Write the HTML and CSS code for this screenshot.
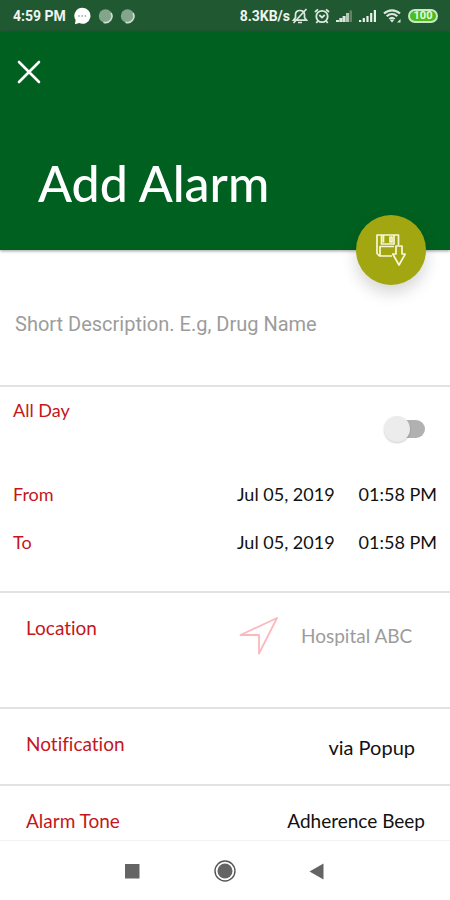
FILE: index.html
```html
<!DOCTYPE html>
<html lang="en">
<head>
<meta charset="utf-8">
<meta name="viewport" content="width=device-width, initial-scale=1">
<title>Add Alarm</title>
<link rel="stylesheet" href="styles.css">
</head>
<body>
<div class="screen">
  <div class="status">
    <div class="status-group">
      <span>4:59 PM</span>
      <svg width="18" height="18" viewBox="0 0 18 18" aria-hidden="true"><path d="M9.500 .8a8 8 0 1 1-3.300 15.300L2 17.300l.6-4.200A8 8 0 0 1 9.500.8z" fill="#fff"/><g fill="#a9bfae"><circle cx="6" cy="9" r="1"/><circle cx="9.200" cy="9" r="1"/><circle cx="12.400" cy="9" r="1"/></g></svg>
      <svg class="orb" width="15" height="16" viewBox="0 0 15 16" aria-hidden="true"><circle cx="7.500" cy="8" r="6.700" fill="#82a58b"/><path d="M13 5a6.300 6.300 0 0 1-7.500 9.200" fill="none" stroke="#cfdfd2" stroke-width="1.600"/></svg>
      <svg class="orb" width="15" height="16" viewBox="0 0 15 16" aria-hidden="true"><circle cx="7.500" cy="8" r="6.700" fill="#82a58b"/><path d="M13 5a6.300 6.300 0 0 1-7.500 9.200" fill="none" stroke="#cfdfd2" stroke-width="1.600"/></svg>
    </div>
    <div class="status-group status-right">
      <div class="speed">
        <span>8.3KB/s</span>
        <svg width="16" height="16" viewBox="0 0 16 16" fill="none" stroke="#dce8de" stroke-width="1.700" aria-hidden="true"><path d="M1.500 12.200h13l-2-2.700V6.500C12.500 4 10.500 2.500 8 2.500S3.500 4 3.500 6.500v3zM6 14.500h4M14.500 1 1.500 15"/></svg>
      </div>
      <svg width="16" height="16" viewBox="0 0 16 16" fill="none" stroke="#dce8de" stroke-width="1.800" aria-hidden="true"><circle cx="8" cy="8.500" r="5.700"/><path d="M5.300 7 8 9.500 10.800 7M1 4l3-2.700M15 4l-3-2.700M3.800 13l-1.500 2M12.200 13l1.500 2"/></svg>
      <svg width="17" height="14" viewBox="0 0 17 14" aria-hidden="true"><path d="M0 13v-2h3v2zm3.300 0V9h3v4zM6.600 13V7h3v6z" fill="#dce8de"/><path d="M10 13V4h3v9z" fill="#b4c8b8"/><path d="M13.500 13V1.500H16V13z" fill="#5f8268"/></svg>
      <svg width="18" height="14" viewBox="0 0 18 14" aria-hidden="true"><path d="M0 13v-2h2.200v2zm3.700 0V9h2.200v4zm3.700 0V7h2.200v6zm3.700 0V4h2.200v9zm3.700 0V1H17v12z" fill="#e8f0e9"/></svg>
      <svg width="19" height="16" viewBox="0 0 19 16" aria-hidden="true"><g fill="none" stroke="#dce8de" stroke-width="2.200"><path d="M1 5.500c4.600-4.300 11.400-4.300 16 0M3.700 8.300c3.200-2.900 7.400-2.900 10.600 0M6.300 11c1.700-1.500 3.700-1.500 5.400 0"/></g><path d="m9 14.500-2-2.200c1.200-1 2.800-1 4 0zM14 14.500l3.500-3.500v3.500z" fill="#dce8de"/></svg>
      <span class="battery">100</span>
    </div>
  </div>

  <header class="header">
    <button class="close" type="button" aria-label="Close">
      <svg width="24" height="24" viewBox="0 0 24 24" fill="none" stroke="#fff" stroke-width="2.600" stroke-linecap="round"><path d="m2 2 20 20M22 2 2 22"/></svg>
    </button>
    <h1 class="title">Add Alarm</h1>
    <button class="save" type="submit" form="alarm" aria-label="Save">
      <svg width="30" height="32" viewBox="0 0 30 32" fill="none" stroke="#f8f8d8" stroke-width="1.700" stroke-linejoin="round"><path d="M16 22H3.500L1 19.500V1h21.500v10M5.500 1v9H18V1M7.500 1v7.500M14 3v5h2V3z"/><path d="M4 22V12.500h14"/><path d="M20 12h6v8h3.200L23 31l-6.200-11H20z"/></svg>
    </button>
  </header>

  <form class="form" id="alarm">
    <section class="section description">
      <input class="field" type="text" placeholder="Short Description. E.g, Drug Name" aria-label="Short description">
    </section>

    <section class="section schedule">
      <div class="row all-day">
        <label class="label" for="all-day">All Day</label>
        <input class="switch" id="all-day" type="checkbox" role="switch">
      </div>
      <div class="row">
        <span class="label">From</span>
        <span class="when"><button class="value" type="button">Jul 05, 2019</button><button class="value" type="button">01:58 PM</button></span>
      </div>
      <div class="row">
        <span class="label">To</span>
        <span class="when"><button class="value" type="button">Jul 05, 2019</button><button class="value" type="button">01:58 PM</button></span>
      </div>
    </section>

    <section class="section inset location">
      <label class="label" for="place">Location</label>
      <div class="place">
        <svg width="40" height="40" viewBox="0 0 40 40" fill="none" stroke="#fbb9bd" stroke-width="1.800" stroke-linejoin="round" aria-hidden="true"><path d="M38 2 1.500 19H20v18.500z"/></svg>
        <input class="field" id="place" type="text" placeholder="Hospital ABC">
      </div>
    </section>

    <section class="section inset notification">
      <span class="label">Notification</span>
      <button class="value" type="button">via Popup</button>
    </section>

    <section class="section inset tone">
      <span class="label">Alarm Tone</span>
      <button class="value" type="button">Adherence Beep</button>
    </section>
  </form>

  <nav class="nav" aria-label="System">
    <button type="button" aria-label="Recent apps"><svg width="22" height="22" viewBox="0 0 22 22"><path d="M3 4h14.500v14.500H3z" fill="#646464"/></svg></button>
    <button type="button" aria-label="Home"><svg width="22" height="22" viewBox="0 0 22 22"><circle cx="11" cy="11" r="10" fill="none" stroke="#555" stroke-width="1.400"/><circle cx="11" cy="11" r="7.500" fill="#646464"/></svg></button>
    <button type="button" aria-label="Back"><svg width="22" height="22" viewBox="0 0 22 22"><path d="M17.500 3.500v16L3.500 11.500z" fill="#646464"/></svg></button>
  </nav>
</div>
</body>
</html>
```
FILE: styles.css
```css
* { box-sizing: border-box; }

body {
  margin: 0;
  background: #fff;
  color: #111;
  font: 19px/24px Lato, Roboto, sans-serif;
  font-variant-ligatures: none;
}

button, input { font: inherit; color: inherit; }

button {
  padding: 0;
  border: 0;
  background: none;
}

svg { display: block; flex: none; }

.screen {
  display: flex;
  flex-direction: column;
  min-height: 100vh;
}

.status {
  display: flex;
  justify-content: space-between;
  align-items: center;
  height: 32px;
  padding: 0 12px 0 13px;
  background: #205832;
  color: #f0f5f0;
  font: 700 14px/16px Roboto, sans-serif;
}

.status-group { display: flex; align-items: center; gap: 7px; }
.status-right { gap: 6px; }
.speed { display: flex; align-items: center; gap: 2px; }

.battery {
  width: 30px;
  height: 14px;
  border: 2px solid #c9e8c4;
  border-radius: 7px;
  background: #4dbb22;
  color: #e4ffd8;
  font-size: 11px;
  line-height: 10px;
  text-align: center;
}

.header {
  position: relative;
  display: flex;
  flex-direction: column;
  justify-content: space-between;
  height: 218px;
  padding: 28px 38px 37px 17px;
  background: #00601f;
  box-shadow: 0 1px 3px rgba(0, 0, 0, .4);
}

.close { width: 24px; height: 24px; }

.title {
  margin: 0 0 0 21px;
  color: #fff;
  font-size: 50px;
  font-weight: 500;
  line-height: 60px;
}

.save {
  position: absolute;
  right: 24px;
  bottom: -35px;
  display: grid;
  place-items: center;
  width: 70px;
  height: 70px;
  border-radius: 50%;
  background: #a1a611;
  box-shadow: 0 8px 16px rgba(0, 0, 0, .16);
}

.form { flex: 1; }

.section { border-bottom: 2px solid #e2e2e2; }
.label { color: #c4161c; }

.field {
  width: 100%;
  padding: 0;
  border: 0;
  outline: 0;
  background: none;
}
.field::placeholder { color: #9c9c9c; opacity: 1; }

.description {
  height: 137px;
  padding: 62px 15px 0;
  font-family: Roboto, sans-serif;
  font-size: 20px;
}

.schedule {
  display: flex;
  flex-direction: column;
  gap: 24px;
  height: 206px;
  padding: 11px 13px 0;
  font-size: 18px;
}

.row { display: flex; justify-content: space-between; }
.all-day { height: 60px; padding-right: 12px; }
.when { display: flex; gap: 24px; }

.switch {
  appearance: none;
  position: relative;
  width: 32px;
  height: 18px;
  margin: 22px 0 0;
  border-radius: 9px;
  background: #b1b1b1;
}
.switch::before {
  content: "";
  position: absolute;
  top: -4px;
  left: -9px;
  width: 26px;
  height: 26px;
  border-radius: 50%;
  background: #ececec;
  box-shadow: 0 1px 2px rgba(0, 0, 0, .2);
}
.switch:checked::before { left: 15px; }

.inset {
  display: flex;
  justify-content: space-between;
  align-items: flex-start;
  padding: 23px 25px 0 26px;
}

.location { height: 116px; }
.place { display: flex; align-items: center; gap: 22px; width: 186px; }
.notification { height: 77px; padding-right: 35px; }
.notification .value { margin-top: 3px; font-size: 20px; }
.tone { height: 54px; border-bottom: 0; }

.nav {
  display: flex;
  justify-content: center;
  gap: 70px;
  height: 60px;
  padding-top: 19px;
  border-top: 1px solid #f2f2f2;
}
.nav button { width: 22px; height: 22px; }
```
